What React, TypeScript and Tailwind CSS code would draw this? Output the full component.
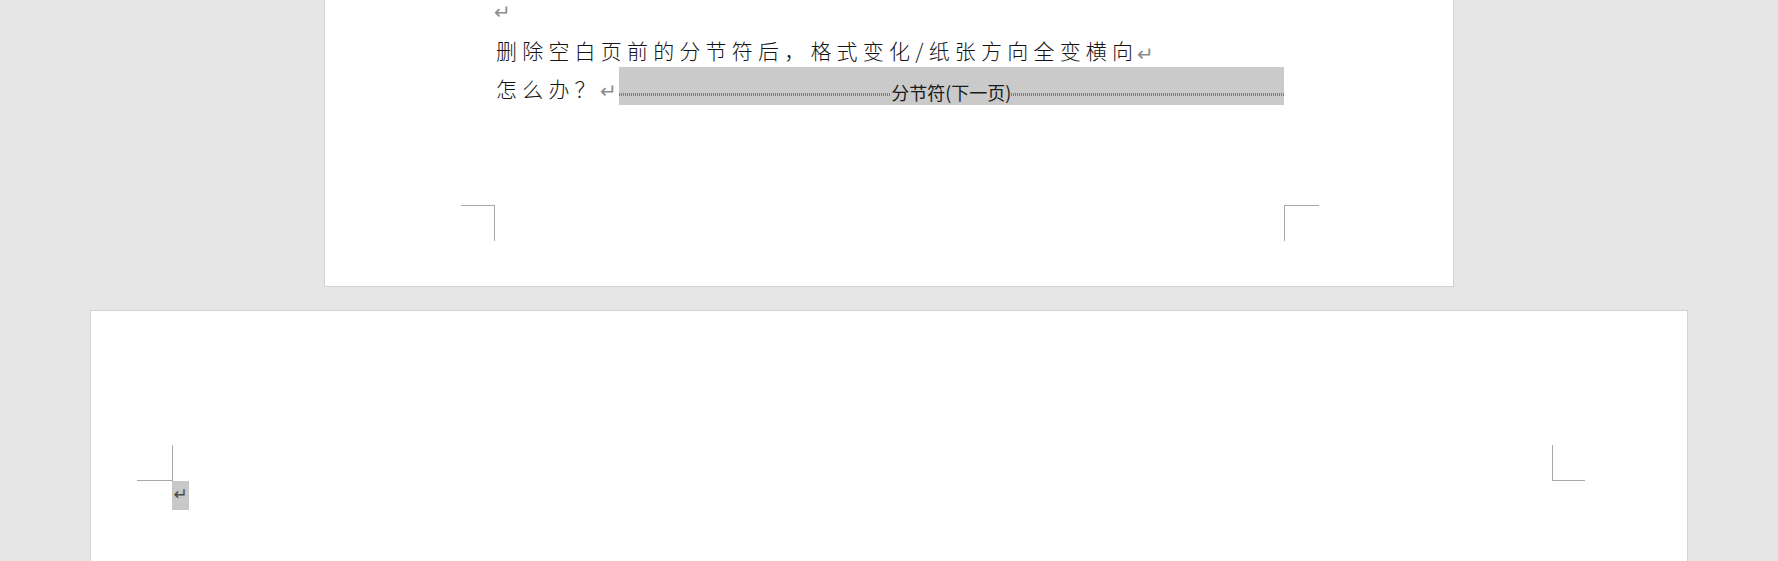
import React from "react";

const cjk = { fontFamily: '"Noto Sans CJK SC", "Noto Sans", sans-serif' };
const mark = { fontFamily: '"DejaVu Sans", sans-serif' };

function Para() {
  return (
    <span className="text-[#8c8c8c] text-[20px] leading-none ml-[2px]" style={mark}>
      ↵
    </span>
  );
}

export default function App() {
  return (
    <div className="w-full h-[561px] overflow-hidden bg-[#e6e6e6] flex flex-col items-center">
      {/* Page 1 (bottom part) */}
      <div className="w-[1130px] h-[287px] shrink-0 bg-white border-x border-b border-[#d2d2d2] flex flex-col">
        <div
          className="-mt-[7px] pl-[171px] text-[21px] leading-[38px] tracking-[5.2px] text-[#141414] font-light"
          style={cjk}
        >
          <div className="h-[38px] flex items-center -ml-[2px]">
            <span className="text-[#8c8c8c] text-[20px] leading-none tracking-normal" style={mark}>↵</span>
          </div>
          <div className="h-[38px] flex items-center whitespace-nowrap">
            <span>删除空白页前的分节符后，格式变化/纸张方向全变横向</span>
            <span className="tracking-normal -ml-[3px] mt-[4px]"><Para /></span>
          </div>
          <div className="h-[38px] flex items-start whitespace-nowrap">
            <span className="h-[38px] flex items-center">怎么办？</span>
            <span className="h-[38px] flex items-center tracking-normal -ml-[3px] mt-[3px]"><Para /></span>
            <div className="-mt-[2px] ml-[2px] w-[665px] h-[38px] bg-[#cacaca] flex items-center pt-[12px] tracking-normal">
              <div className="flex-1 h-[3px] mt-[4px] bg-[repeating-linear-gradient(90deg,#7c7c7c_0px,#7c7c7c_1px,transparent_1px,transparent_2px)]" />
              <span
                className="text-[18px] leading-none text-[#1a1a1a] font-normal"
                style={cjk}
              >
                分节符(下一页)
              </span>
              <div className="flex-1 h-[3px] mt-[4px] bg-[repeating-linear-gradient(90deg,#7c7c7c_0px,#7c7c7c_1px,transparent_1px,transparent_2px)]" />
            </div>
          </div>
        </div>
        <div className="mt-auto mb-[45px] ml-[136px] mr-[134px] flex justify-between">
          <div className="w-[34px] h-[36px] border-t border-r border-[#a8a8a8]" />
          <div className="w-[35px] h-[36px] border-t border-l border-[#a8a8a8]" />
        </div>
      </div>

      {/* Page 2 (top part) */}
      <div className="mt-[23px] w-[1598px] flex-1 bg-white border-x border-t border-[#d2d2d2] flex flex-col">
        <div className="mt-[134px] ml-[46px] mr-[102px] flex justify-between">
          <div className="w-[36px] h-[36px] border-r border-b border-[#a8a8a8]" />
          <div className="w-[33px] h-[36px] border-l border-b border-[#a8a8a8]" />
        </div>
        <div className="ml-[81px] w-[17px] h-[29px] bg-[#c8c8c8] flex justify-center pt-[5px]">
          <span className="text-[#4a4a4a] text-[17px] leading-none" style={mark}>↵</span>
        </div>
      </div>
    </div>
  );
}
